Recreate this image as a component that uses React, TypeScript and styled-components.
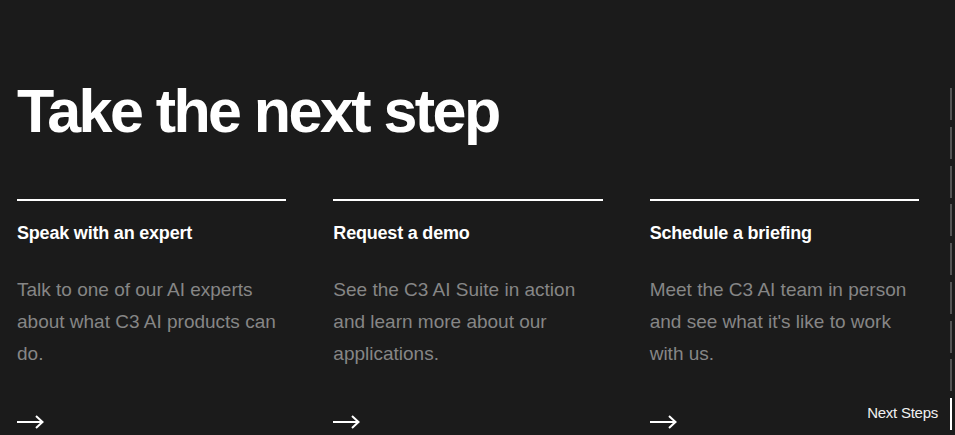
import React from "react";
import styled, { createGlobalStyle } from "styled-components";

const Global = createGlobalStyle`
  html, body { margin: 0; padding: 0; background: #1b1b1b; }
  body { font-family: "Liberation Sans", Arial, sans-serif; overflow: hidden; }
`;

const Page = styled.div`
  position: relative;
  width: 955px;
  height: 435px;
  background: #1b1b1b;
  color: #fff;
  box-sizing: border-box;
  padding: 78px 36px 0 17px;
  overflow: hidden;
`;

const Heading = styled.h1`
  margin: 0;
  font-size: 61px;
  line-height: 66px;
  font-weight: 700;
  letter-spacing: -0.042em;
  color: #fff;
`;

const Cards = styled.div`
  display: grid;
  width: 902px;
  grid-template-columns: repeat(3, 1fr);
  column-gap: 47px;
  margin-top: 55px;
`;

const Card = styled.div`
  display: flex;
  flex-direction: column;
  border-top: 2.5px solid #fff;
`;

const CardTitle = styled.h3`
  margin: 21px 0 0;
  font-size: 18px;
  line-height: 22px;
  font-weight: 700;
  letter-spacing: -0.2px;
  color: #fff;
`;

const CardText = styled.p`
  margin: 30px 0 0;
  font-size: 19px;
  line-height: 32px;
  color: #868686;
  height: 96px;
`;

const ArrowLink = styled.a`
  display: block;
  margin-top: 45px;
  width: 27px;
  height: 14px;
  color: #fff;
`;

const Rail = styled.nav`
  position: absolute;
  right: 3px;
  top: 88px;
  display: flex;
  flex-direction: column;
  align-items: flex-end;
  gap: 6.75px;
`;

const RailItem = styled.div`
  display: flex;
  align-items: center;
  gap: 12px;
  height: 32px;
`;

const RailLabel = styled.span`
  font-size: 15px;
  letter-spacing: -0.25px;
  padding-bottom: 4px;
  color: #f0f0f0;
`;

const RailBar = styled.span<{ $active?: boolean }>`
  display: block;
  width: 2px;
  height: 32px;
  background: ${(p) => (p.$active ? "#ffffff" : "#555555")};
`;

const Arrow = () => (
  <svg width="27" height="14" viewBox="0 0 27 14" fill="none">
    <path d="M0 7H25.5" stroke="currentColor" strokeWidth="2" />
    <path d="M19 1L25.5 7L19 13" stroke="currentColor" strokeWidth="2" />
  </svg>
);

const cards = [
  {
    title: "Speak with an expert",
    text: "Talk to one of our AI experts about what C3 AI products can do.",
  },
  {
    title: "Request a demo",
    text: "See the C3 AI Suite in action and learn more about our applications.",
  },
  {
    title: "Schedule a briefing",
    text: "Meet the C3 AI team in person and see what it's like to work with us.",
  },
];

export default function App() {
  return (
    <>
      <Global />
      <Page>
        <Heading>Take the next step</Heading>
        <Cards>
          {cards.map((c) => (
            <Card key={c.title}>
              <CardTitle>{c.title}</CardTitle>
              <CardText>{c.text}</CardText>
              <ArrowLink href="#">
                <Arrow />
              </ArrowLink>
            </Card>
          ))}
        </Cards>
        <Rail>
          {Array.from({ length: 8 }).map((_, i) => (
            <RailItem key={i}>
              <RailBar />
            </RailItem>
          ))}
          <RailItem>
            <RailLabel>Next Steps</RailLabel>
            <RailBar $active />
          </RailItem>
        </Rail>
      </Page>
    </>
  );
}
